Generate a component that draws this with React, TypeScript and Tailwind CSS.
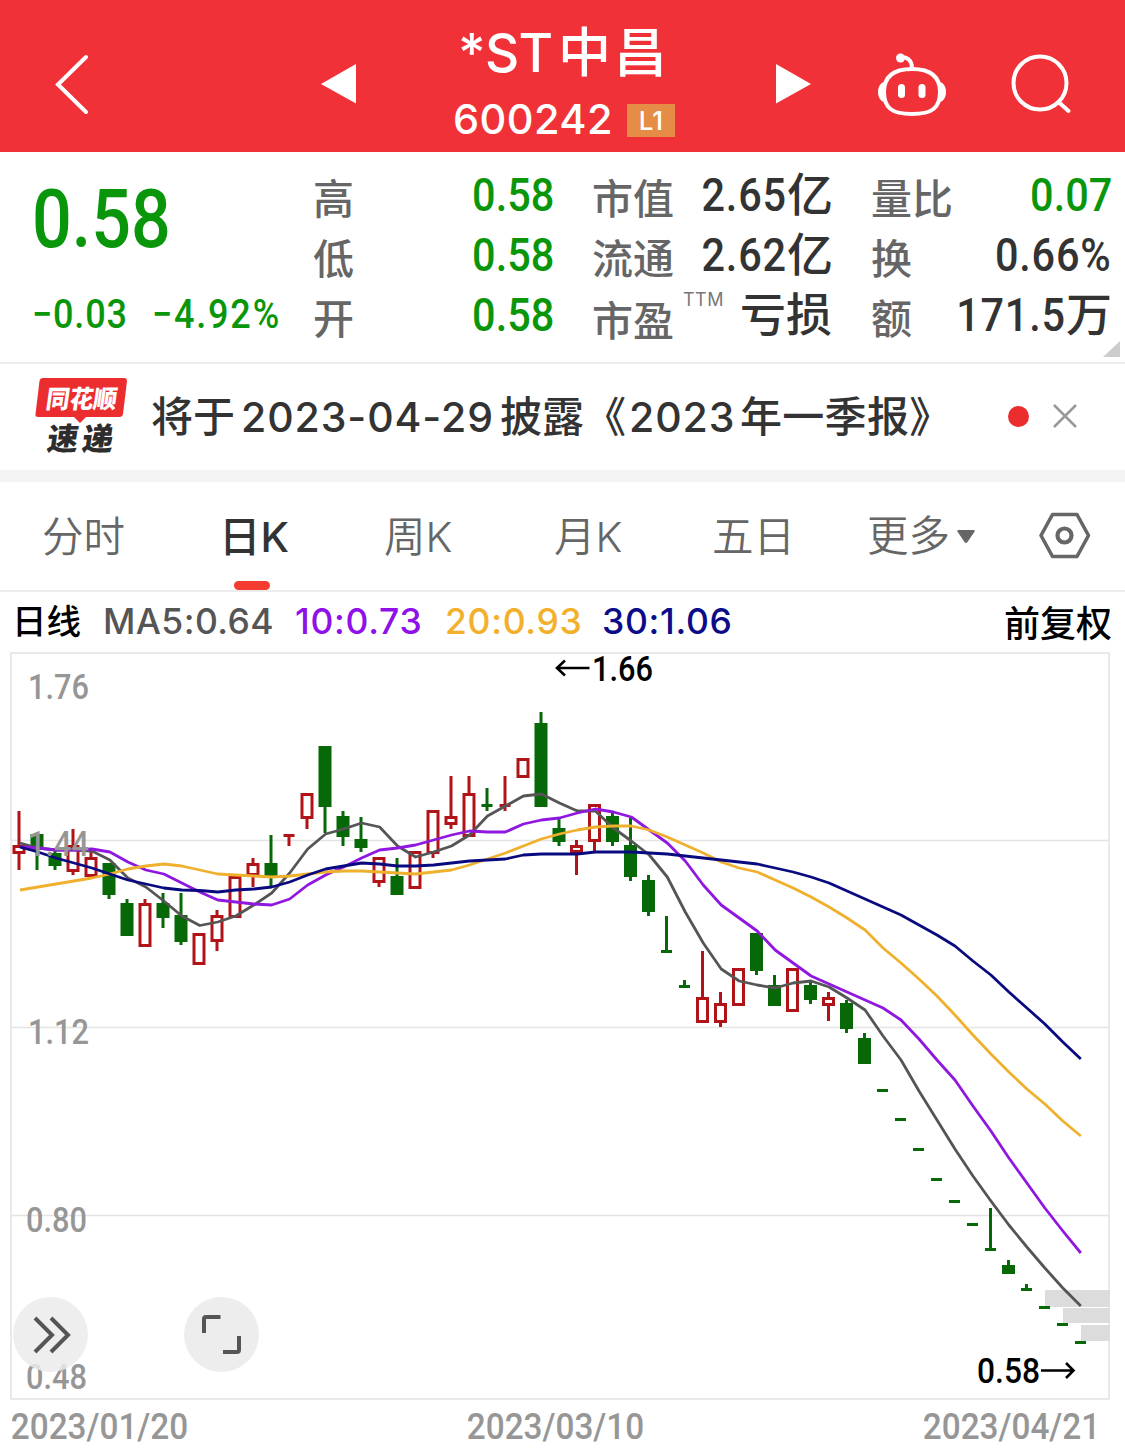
import { useState } from 'react';
import type { ReactNode } from 'react';

type Candle = { up: boolean; high: number; top: number; bottom: number; low: number };

const STEP = 18;
const FIRST_X = 19;

// [direction, high, body top, body bottom, low] in chart pixels
const RAW: [string, number, number, number, number][] = [
    ['r', 811, 845, 854, 870],
    ['g', 834, 834, 850, 870],
    ['g', 850, 853, 866, 870],
    ['r', 829, 845, 872, 875],
    ['r', 852, 857, 877, 877],
    ['g', 863, 863, 895, 899],
    ['g', 899, 903, 936, 936],
    ['r', 899, 903, 947, 947],
    ['g', 893, 903, 918, 928],
    ['g', 893, 915, 942, 945],
    ['r', 933, 933, 965, 965],
    ['r', 910, 915, 942, 951],
    ['r', 876, 876, 918, 918],
    ['r', 858, 863, 876, 887],
    ['g', 835, 863, 877, 886],
    ['r', 834, 834, 837, 846],
    ['r', 793, 793, 819, 829],
    ['g', 746, 746, 807, 833],
    ['g', 811, 816, 837, 846],
    ['g', 817, 839, 848, 852],
    ['r', 857, 857, 883, 887],
    ['g', 858, 876, 895, 895],
    ['r', 851, 851, 889, 889],
    ['r', 810, 810, 854, 858],
    ['r', 776, 816, 825, 829],
    ['r', 776, 793, 837, 837],
    ['g', 788, 804, 807, 811],
    ['r', 776, 804, 807, 811],
    ['r', 758, 758, 778, 778],
    ['g', 712, 723, 807, 807],
    ['g', 819, 828, 842, 846],
    ['r', 840, 845, 853, 875],
    ['r', 804, 804, 842, 851],
    ['g', 812, 816, 842, 846],
    ['g', 818, 845, 877, 881],
    ['g', 875, 880, 912, 916],
    ['g', 916, 950, 953, 953],
    ['g', 980, 985, 988, 988],
    ['r', 951, 997, 1023, 1023],
    ['r', 992, 1003, 1023, 1027],
    ['r', 968, 968, 1006, 1006],
    ['g', 933, 933, 971, 975],
    ['g', 975, 985, 1006, 1006],
    ['r', 968, 968, 1012, 1012],
    ['g', 982, 985, 1000, 1004],
    ['r', 992, 997, 1006, 1021],
    ['g', 1000, 1003, 1029, 1033],
    ['g', 1033, 1038, 1064, 1064],
    ['g', 1089, 1089, 1092, 1092],
    ['g', 1118, 1118, 1121, 1121],
    ['g', 1148, 1148, 1151, 1151],
    ['g', 1178, 1178, 1181, 1181],
    ['g', 1200, 1200, 1203, 1203],
    ['g', 1223, 1223, 1226, 1226],
    ['g', 1208, 1248, 1251, 1251],
    ['g', 1260, 1265, 1274, 1274],
    ['g', 1284, 1288, 1291, 1291],
    ['g', 1306, 1306, 1309, 1309],
    ['g', 1323, 1323, 1326, 1326],
    ['g', 1341, 1341, 1344, 1344],
];

const candles: Candle[] = RAW.map(([d, high, top, bottom, low]) => ({ up: d === 'r', high, top, bottom, low }));

const lines = [
    {
        name: 'MA5',
        color: '#555555',
        ys: [843, 848, 850, 850, 851, 860, 878, 887, 901, 916, 925.5, 922, 916, 905, 893, 873, 849, 834, 829, 823, 827, 846, 857, 852, 846, 835, 816, 806, 796, 794, 803, 811, 811, 828, 841, 855, 877, 912, 943, 969, 981, 985, 988, 983, 981, 987, 998, 1010, 1036, 1060, 1091, 1120, 1149, 1176, 1201, 1225, 1247, 1268, 1288, 1306],
    },
    {
        name: 'MA10',
        color: '#8f17e0',
        ys: [847, 848, 850, 850, 849, 852, 862, 870, 874, 883, 892, 900, 902, 904, 905, 899, 885, 875, 867, 858, 850, 848, 845, 840, 835, 831, 832, 832, 824, 820, 818, 813, 809, 812, 817, 830, 843, 861, 885, 905, 918, 931, 950, 963, 976, 984, 992, 1000, 1008, 1020, 1039, 1060, 1080, 1106, 1131, 1158, 1183, 1208, 1231, 1253],
    },
    {
        name: 'MA20',
        color: '#efb02e',
        ys: [890, 887, 884, 881, 878, 874, 869, 866, 864, 866, 870, 874, 875, 876, 877, 876, 874, 872, 871, 871, 872, 873, 874, 872, 870, 865, 859, 853, 846, 839, 834, 830, 827, 826, 826, 830, 837, 845, 853, 862, 868, 872, 880, 888, 897, 907, 918, 930, 948, 963, 979, 996, 1015, 1035, 1054, 1072, 1089, 1104, 1121, 1136],
    },
    {
        name: 'MA30',
        color: '#0a0a80',
        ys: [847, 852, 858, 863, 868, 874, 880, 884, 888, 890, 890.5, 892, 890, 889, 887, 882, 875, 869, 866, 863, 864, 866, 866, 865, 863, 861, 860, 859, 855, 854, 854, 854, 852, 852, 852, 853, 854, 856, 858, 860, 862, 864, 868, 872, 877, 883, 891, 899, 907, 915, 925, 935, 946, 961, 975, 992, 1008, 1024, 1042, 1059],
    },
];

const axisLabels = [
    { text: '1.76', x: 28, y: 699 },
    { text: '1.44', x: 28, y: 856 },
    { text: '1.12', x: 28, y: 1044 },
    { text: '0.80', x: 26, y: 1232 },
    { text: '0.48', x: 26, y: 1389 },
];

const tabs = [
    { label: '分时', pos: 'w-[179px] pl-[42px]' },
    { label: '日K', pos: 'w-[205px] pl-[40px]' },
    { label: '周K', pos: 'w-[170px]' },
    { label: '月K', pos: 'w-[158px]' },
    { label: '五日', pos: 'w-[155px]' },
];

function Header() {
    return (
        <header className="flex h-[152px] bg-[#f03238] text-white">
            <svg className="w-[450px] h-[152px] shrink-0" viewBox="0 0 450 152" fill="none">
                <path d="M86 57L58 84.500L86 112" stroke="white" strokeWidth="4" strokeLinecap="round" />
                <path d="M356 64V103.500L321 84Z" fill="white" />
            </svg>
            <div className="flex flex-col w-[226px] shrink-0 pt-[21px]">
                <div className="flex h-[64px] items-center pl-[8px] font-medium text-[53px] leading-[64px]">
                    <span className="w-[100px] tracking-[-0.600px]">*ST</span>
                    <span className="tracking-[3px]">中昌</span>
                </div>
                <div className="flex h-[66px] items-start pl-[3px]">
                    <span className="w-[174px] text-[41.500px] font-medium leading-[68px] tracking-[0.400px]">600242</span>
                    <span className="mt-[19px] flex h-[33px] w-[48px] items-center justify-center bg-[#e58d46] text-[26px] font-medium">L1</span>
                </div>
            </div>
            <svg className="w-[449px] h-[152px] shrink-0" viewBox="676 0 449 152" fill="none">
                <path d="M776 64V103.500L811 84Z" fill="white" />
                {/* robot assistant */}
                <circle cx="900.500" cy="58" r="4.500" fill="white" />
                <path d="M901 57C907 57 912 60 912 68" stroke="white" strokeWidth="4" />
                <path d="M912 69C930 69 940 76 940 92C940 108 932 114 912 114C892 114 884 108 884 92C884 76 894 69 912 69Z" stroke="white" strokeWidth="4" />
                <path d="M884 82C876 84 876 100 884 102ZM940 82C948 84 948 100 940 102Z" fill="white" />
                <rect x="898" y="84" width="7" height="14" rx="3.500" fill="white" />
                <rect x="918.500" y="84" width="7" height="14" rx="3.500" fill="white" />
                <circle cx="1040" cy="83" r="26.500" stroke="white" strokeWidth="4" />
                <path d="M1058.500 102L1068.500 111" stroke="white" strokeWidth="4" strokeLinecap="round" />
            </svg>
        </header>
    );
}

// Narrow numerals, squeezed towards the side they are aligned to
function Num({ children, className = '' }: { children: ReactNode; className?: string }) {
    return <span className={`inline-block font-['Roboto'] font-medium whitespace-nowrap ${className}`}>{children}</span>;
}

function Stat({ label, children }: { label: ReactNode; children: ReactNode }) {
    return (
        <div className="flex h-[60px] items-center justify-between whitespace-nowrap">
            <span className="mt-[3px] text-[41px] font-medium leading-[60px] text-[#666666]">{label}</span>
            {children}
        </div>
    );
}

function StatNum({ children, unit, green }: { children: ReactNode; unit?: string; green?: boolean }) {
    return (
        <span className={`flex items-center leading-[60px] -mt-1 ${green ? 'text-[#0a960a]' : 'text-[#333333]'}`}>
            <Num className={`text-[46px] scale-x-90 origin-right ${green ? '' : 'tracking-[0.900px]'}`}>{children}</Num>
            {unit && <span className="-mt-[2px] text-[46px] font-medium">{unit}</span>}
        </span>
    );
}

function Quote() {
    return (
        <section className="relative flex h-[212px] border-b-2 border-[#ececec] pt-[15px]">
            <div className="w-[313px] shrink-0 pl-[32px] text-[#0a960a]">
                <Num className="block h-[117px] text-[81px] leading-[105px] scale-x-[0.865] origin-left">0.58</Num>
                <div className="flex">
                    <Num className="w-[120px] text-[40px] leading-[62px] tracking-[0.900px] scale-x-90 origin-left">−0.03</Num>
                    <Num className="text-[40px] leading-[62px] tracking-[2px] scale-x-90 origin-left">−4.92%</Num>
                </div>
            </div>
            <div className="w-[241px] shrink-0">
                <Stat label="高"><StatNum green>0.58</StatNum></Stat>
                <Stat label="低"><StatNum green>0.58</StatNum></Stat>
                <Stat label="开"><StatNum green>0.58</StatNum></Stat>
            </div>
            <div className="ml-[38px] w-[241px] shrink-0">
                <Stat label="市值"><StatNum unit="亿">2.65</StatNum></Stat>
                <Stat label="流通"><StatNum unit="亿">2.62</StatNum></Stat>
                <div className="flex h-[60px]">
                    <span className="mt-[4px] w-[91px] text-[41px] font-medium leading-[60px] text-[#666666]">市盈</span>
                    <span className="w-[57px] text-[18px] leading-[26px] tracking-[0.500px] text-[#777777]">TTM</span>
                    <span className="-mt-[3px] text-[46px] font-medium leading-[60px] text-[#333333]">亏损</span>
                </div>
            </div>
            <div className="ml-[38px] w-[241px] shrink-0">
                <Stat label="量比"><StatNum green>0.07</StatNum></Stat>
                <Stat label="换"><StatNum>0.66%</StatNum></Stat>
                <Stat label="额"><StatNum unit="万">171.5</StatNum></Stat>
            </div>
            <svg className="absolute right-[5px] bottom-[5px] h-[16px] w-[17px]" viewBox="0 0 17 16">
                <path d="M17 0V16H0Z" fill="#cccccc" />
            </svg>
        </section>
    );
}

function News({ onClose }: { onClose: () => void }) {
    return (
        <section className="flex h-[118px] items-start border-b-[12px] border-[#f4f4f4]">
            <svg className="h-[106px] w-[151px] shrink-0" viewBox="0 364 151 106">
                <path d="M43 378H124Q127 378 127 381L123 414Q122.500 417 119.500 417H86L80 423L74 417H38Q35 417 35.500 414L39.500 381Q40 378 43 378Z" fill="#ec2d30" />
                <text transform="translate(45 408) skewX(-8)" fontSize="25" fontWeight="900" fill="white" textLength="71" lengthAdjust="spacingAndGlyphs">同花顺</text>
                <text transform="translate(46 450) skewX(-8)" fontSize="31" fontWeight="900" fill="#2d2d2d" textLength="66">速递</text>
            </svg>
            <p className="flex w-[856px] shrink-0 whitespace-nowrap text-[42px] font-medium leading-[106px] text-[#333333]">
                <span className="w-[90px]">将于</span>
                <span className="w-[259px] text-[41px] tracking-[0.900px]">2023-04-29</span>
                <span className="w-[129px]">披露《</span>
                <span className="w-[111px] text-[41px] tracking-[0.900px]">2023</span>
                <span className="tracking-[0.300px]">年一季报》</span>
            </p>
            <svg className="h-[106px] w-[118px] shrink-0" viewBox="1007 364 118 106" onClick={onClose}>
                <circle cx="1018.500" cy="416.500" r="10.500" fill="#ec2d30" />
                <path d="M1054 405L1076 427M1076 405L1054 427" stroke="#999999" strokeWidth="2.600" />
            </svg>
        </section>
    );
}

function Tabs() {
    const [active, setActive] = useState('日K');
    return (
        <nav className="flex h-[110px] border-b-2 border-[#ececec] text-[41.500px] leading-[110px] text-[#666666]">
            {tabs.map((tab) => (
                <button
                    key={tab.label}
                    onClick={() => setActive(tab.label)}
                    className={`relative h-[108px] shrink-0 text-left whitespace-nowrap ${tab.pos} ${active === tab.label ? 'font-medium text-[#333333]' : 'font-[350]'}`}
                >
                    {tab.label}
                    {active === tab.label && (
                        <span className="absolute bottom-0 left-[55px] h-[9px] w-[36px] rounded-full bg-[#f43c30]" />
                    )}
                </button>
            ))}
            <button className="flex h-[108px] w-[171px] shrink-0 items-center font-[350]">
                更多
                <svg className="ml-[7px] h-[13px] w-[18px]" viewBox="0 0 18 13">
                    <path d="M1.500 0H16.500Q18.500 0 17.300 2L10.500 12Q9 14 7.500 12L0.700 2Q-0.500 0 1.500 0Z" fill="#666666" />
                </svg>
            </button>
            <svg className="mt-[29px] h-[50px] w-[54px] shrink-0" viewBox="1038 511 54 50" fill="none" stroke="#666666">
                <path d="M1052.500 514.500H1077L1088.500 535.500L1077 556.500H1052.500L1041 535.500Z" strokeWidth="3.600" strokeLinejoin="round" />
                <circle cx="1064.500" cy="535.500" r="7" strokeWidth="4.200" />
            </svg>
        </nav>
    );
}

function Legend() {
    return (
        <div className="flex h-[60px] items-center whitespace-nowrap pl-[12px] text-[35.500px] font-medium leading-[60px] tracking-[0.700px]">
            <span className="w-[91px] text-[34.500px] text-black tracking-normal">日线</span>
            <span className="w-[192px] text-[#555555] tracking-[0.400px]">MA5:0.64</span>
            <span className="w-[150px] text-[#8f10e8]">10:0.73</span>
            <span className="w-[157px] text-[#f2b02c]">20:0.93</span>
            <span className="w-[402px] text-[#0c0c88]">30:1.06</span>
            <span className="mt-[3px] text-[36px] text-black tracking-normal">前复权</span>
        </div>
    );
}

function CandleShape({ c, x }: { c: Candle; x: number }) {
    const color = c.up ? '#b01418' : '#066806';
    const h = c.bottom - c.top;
    return (
        <g fill={color}>
            {c.high < c.top && <rect x={x - 1.5} y={c.high} width="3" height={c.top - c.high} />}
            {c.low > c.bottom && <rect x={x - 1.5} y={c.bottom} width="3" height={c.low - c.bottom} />}
            {h <= 3 && <rect x={x - 5.5} y={c.top} width="11" height="3" />}
            {h > 3 && !c.up && <rect x={x - 6.5} y={c.top} width="13" height={h} />}
            {h > 3 && c.up && (
                <rect x={x - 5} y={c.top + 1.5} width="10" height={h - 3} fill="white" stroke={color} strokeWidth="3" />
            )}
        </g>
    );
}

function Chart() {
    return (
        <div className="relative h-[752px]">
            <svg className="block h-[752px] w-[1125px] overflow-visible" viewBox="0 652 1125 752">
                <g fill="none" stroke="#e4e4e4" strokeWidth="1.600">
                    <rect x="11" y="653" width="1098" height="746" />
                    <path d="M11 840.500H1109M11 1027.500H1109M11 1215.500H1109" />
                </g>
                <g fill="#dcdcdc">
                    <rect x="1045" y="1290" width="65" height="17" />
                    <rect x="1063" y="1308" width="47" height="15" />
                    <rect x="1081" y="1325" width="29" height="16" />
                </g>
                {candles.map((c, i) => <CandleShape key={i} c={c} x={FIRST_X + i * STEP - (i > 30 ? 0.5 : 0)} />)}
                {lines.map((line) => (
                    <polyline
                        key={line.name}
                        points={line.ys.map((y, i) => `${20 + i * 17.98},${y}`).join(' ')}
                        fill="none"
                        stroke={line.color}
                        strokeWidth="2.800"
                        strokeLinejoin="round"
                    />
                ))}
                <g fill="#969696" fontFamily="Roboto" fontWeight="500" fontSize="35">
                    {axisLabels.map((l) => (
                        <text key={l.text} x={l.x} y={l.y} textLength="61" lengthAdjust="spacingAndGlyphs">{l.text}</text>
                    ))}
                </g>
                {/* highest and latest price markers */}
                <g fill="black" fontFamily="Roboto" fontWeight="500" fontSize="35">
                    <text x="592" y="681" textLength="61" lengthAdjust="spacingAndGlyphs">1.66</text>
                    <text x="977" y="1383" textLength="63" lengthAdjust="spacingAndGlyphs">0.58</text>
                </g>
                <path
                    d="M589.500 668H557M565 660.500L557 668L565 675.500M1041 1370.500H1073.500M1066 1363L1073.500 1370.500L1066 1378"
                    fill="none"
                    stroke="black"
                    strokeWidth="2.600"
                />
            </svg>
            {/* floating chart controls */}
            <button className="absolute left-[13px] top-[645px] h-[75px] w-[75px] rounded-full bg-[#ebebeb]/85">
                <svg className="h-[75px] w-[75px]" viewBox="0 0 75 75" fill="none" stroke="#555555" strokeWidth="4">
                    <path d="M22 21L39 38L22 55M38 21L55 38L38 55" />
                </svg>
            </button>
            <button className="absolute left-[184px] top-[645px] h-[75px] w-[75px] rounded-full bg-[#ebebeb]/90">
                <svg className="h-[75px] w-[75px]" viewBox="0 0 75 75" fill="none" stroke="#555555" strokeWidth="4">
                    <path d="M36.500 20H22Q20 20 20 22V36M39 55H53Q55 55 55 53V39" />
                </svg>
            </button>
        </div>
    );
}

export default function App() {
    const [showNews, setShowNews] = useState(true);

    return (
        <div className="h-[1449px] w-[1125px] overflow-hidden bg-white font-['Inter','Noto_Sans_CJK_SC',sans-serif]">
            <Header />
            <Quote />
            {showNews && <News onClose={() => setShowNews(false)} />}
            <Tabs />
            <Legend />
            <Chart />
            <div className="flex text-[#969696] text-[37px] leading-[45px]">
                <Num className="w-[456px] pl-[12px] scale-x-90 origin-left">2023/01/20</Num>
                <Num className="w-[456px] pl-[12px] scale-x-90 origin-left">2023/03/10</Num>
                <Num className="pl-[12px] scale-x-90 origin-left">2023/04/21</Num>
            </div>
        </div>
    );
}
